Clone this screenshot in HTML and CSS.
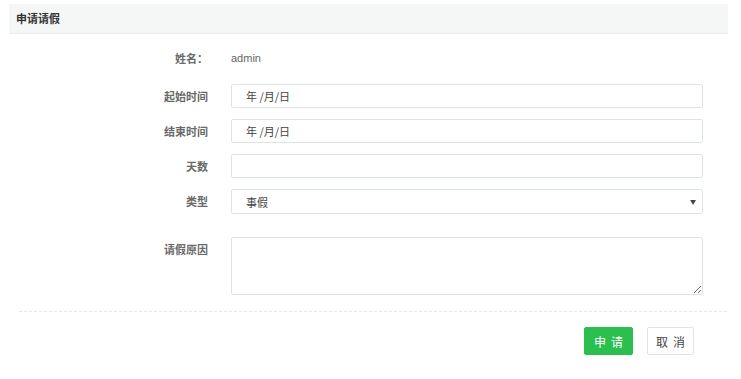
FILE: index.html
```html
<!DOCTYPE html>
<html lang="zh-CN">
<head>
    <meta charset="UTF-8">
    <meta name="viewport" content="width=device-width, initial-scale=1.0">
    <title>申请请假</title>
    <link rel="stylesheet" href="styles.css">
</head>
<body>
    <div class="panel">
        <div class="panel-heading">申请请假</div>
        <div class="panel-body">
            <form class="leave-form">
                <div class="form-row name-row">
                    <label class="form-label">姓名：</label>
                    <div class="form-static">admin</div>
                </div>
                <div class="form-row">
                    <label class="form-label">起始时间</label>
                    <div class="form-control">年 /月/日</div>
                </div>
                <div class="form-row">
                    <label class="form-label">结束时间</label>
                    <div class="form-control">年 /月/日</div>
                </div>
                <div class="form-row">
                    <label class="form-label">天数</label>
                    <div class="form-control"></div>
                </div>
                <div class="form-row">
                    <label class="form-label">类型</label>
                    <div class="form-control select-control">事假</div>
                </div>
                <div class="form-row reason-row">
                    <label class="form-label">请假原因</label>
                    <textarea class="form-textarea"></textarea>
                </div>
                <div class="form-actions">
                    <button type="button" class="btn btn-apply">申请</button>
                    <button type="button" class="btn btn-cancel">取消</button>
                </div>
            </form>
        </div>
    </div>
</body>
</html>
```

FILE: styles.css
```css
body {
    font-family: "Noto Sans CJK SC", "Liberation Sans", sans-serif;
    font-size: 11px;
    color: #555;
    background-color: #fff;
    margin: 0;
    padding: 4px 13px 0 9px;
}

.panel-heading {
    height: 29px;
    line-height: 29px;
    padding-left: 7px;
    background-color: #f5f6f6;
    border-bottom: 1px solid #ebeeee;
    font-weight: bold;
    color: #333;
}

.panel-body {
    padding: 0 1px 0 10px;
}

.leave-form {
    padding-top: 12px;
}

.form-row {
    display: grid;
    grid-template-columns: 189px 472px;
    column-gap: 23px;
    align-items: start;
    margin-bottom: 11px;
}

.name-row {
    margin-bottom: 14px;
}

.form-label {
    text-align: right;
    line-height: 24px;
    font-weight: bold;
    color: #6a6a6a;
}

.form-static {
    font-family: "Liberation Sans", sans-serif;
    line-height: 24px;
    color: #666;
}

.form-control {
    box-sizing: border-box;
    height: 24px;
    line-height: 22px;
    padding-left: 14px;
    border: 1px solid #dde4e6;
    border-radius: 2px;
    color: #444;
}

.select-control {
    height: 25px;
    line-height: 25px;
    position: relative;
}

.select-control::after {
    content: "▼";
    position: absolute;
    right: 6px;
    top: -1px;
    font-size: 6px;
    color: #444;
}

.reason-row {
    margin-top: 23px;
    margin-bottom: 0;
}

.form-textarea {
    box-sizing: border-box;
    width: 472px;
    height: 58px;
    margin: 0;
    border: 1px solid #dde4e6;
    border-radius: 2px;
    font-family: inherit;
}

.form-actions {
    margin-top: 16px;
    border-top: 1px dashed #e6e9ea;
    padding: 15px 33px 0 0;
    display: flex;
    justify-content: flex-end;
    gap: 14px;
}

.btn {
    font-family: "Noto Sans CJK SC", sans-serif;
    font-size: 12px;
    letter-spacing: 5px;
    text-indent: 5px;
    height: 28px;
    border-radius: 2px;
    cursor: pointer;
    padding: 0;
}

.btn-apply {
    width: 49px;
    background: #2bbf4f;
    color: #fff;
    border: 1px solid #2bbf4f;
}

.btn-cancel {
    width: 47px;
    background: #fff;
    color: #444;
    border: 1px solid #e3e3e3;
}
```
